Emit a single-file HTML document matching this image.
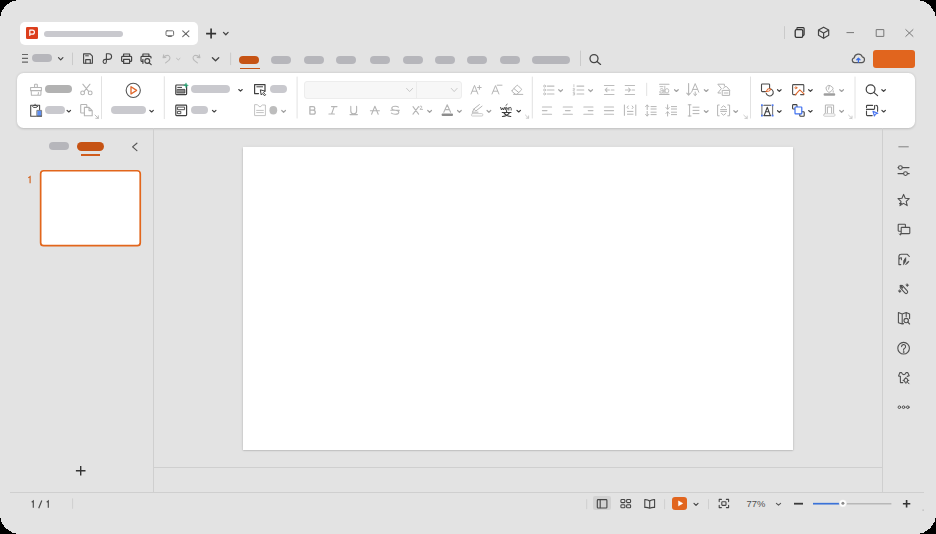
<!DOCTYPE html>
<html><head><meta charset="utf-8">
<style>
html,body{margin:0;padding:0;width:936px;height:534px;overflow:hidden;background:#000;font-family:"Liberation Sans",sans-serif;}
.win{position:absolute;left:0;top:0;width:936px;height:534px;background:#e3e3e3;overflow:hidden;}
.a{position:absolute;}
.p{position:absolute;border-radius:5px;}
svg{position:absolute;left:0;top:0;}
</style></head>
<body>
<div class="win">
  <!-- tab -->
  <div class="a" style="left:20px;top:22px;width:178px;height:22.5px;background:#fff;border-radius:5px;"></div>
  <div class="a" style="left:26px;top:27.2px;width:12px;height:11.8px;background:#dc3e1c;border-radius:1.3px;"></div>
  <div class="p" style="left:44px;top:30.5px;width:79px;height:6.5px;background:#c9c9ce;border-radius:4px;"></div>

  <!-- quick access pills -->
  <div class="p" style="left:32px;top:54px;width:20px;height:8px;background:#b6b6bb;"></div>
  <div class="p" style="left:239px;top:55.5px;width:20px;height:8.5px;background:#c65314;"></div>
  <div class="a" style="left:239.5px;top:67.5px;width:20px;height:1.5px;background:#c65314;"></div>
  <div class="p" style="left:271px;top:55.5px;width:20px;height:8.5px;background:#b6b6bb;"></div>
  <div class="p" style="left:304px;top:55.5px;width:20px;height:8.5px;background:#b6b6bb;"></div>
  <div class="p" style="left:336px;top:55.5px;width:20px;height:8.5px;background:#b6b6bb;"></div>
  <div class="p" style="left:370px;top:55.5px;width:20px;height:8.5px;background:#b6b6bb;"></div>
  <div class="p" style="left:403px;top:55.5px;width:20px;height:8.5px;background:#b6b6bb;"></div>
  <div class="p" style="left:435px;top:55.5px;width:20px;height:8.5px;background:#b6b6bb;"></div>
  <div class="p" style="left:467px;top:55.5px;width:20px;height:8.5px;background:#b6b6bb;"></div>
  <div class="p" style="left:500px;top:55.5px;width:20px;height:8.5px;background:#b6b6bb;"></div>
  <div class="p" style="left:532px;top:55.5px;width:37.5px;height:8.5px;background:#b6b6bb;"></div>

  <!-- orange share button -->
  <div class="a" style="left:873px;top:50px;width:41.5px;height:17.5px;background:#e1651e;border-radius:3px;"></div>

  <!-- ribbon -->
  <div class="a" style="left:17px;top:73px;width:898px;height:55px;background:#fff;border-radius:6.5px;box-shadow:0 0.8px 2.4px rgba(0,0,0,0.17);"></div>

  <!-- ribbon pills -->
  <div class="p" style="left:45px;top:85.3px;width:26.8px;height:8px;background:#b2b2b2;"></div>
  <div class="p" style="left:45px;top:106px;width:20px;height:8px;background:#c9c9ce;"></div>
  <div class="p" style="left:111px;top:106px;width:35px;height:8px;background:#c9c9ce;"></div>
  <div class="p" style="left:191px;top:85.2px;width:38.5px;height:8.2px;background:#c9c9ce;"></div>
  <div class="p" style="left:191px;top:106.1px;width:17px;height:8.3px;background:#c9c9ce;"></div>
  <div class="p" style="left:269.5px;top:85.2px;width:17px;height:8.2px;background:#c9c9ce;"></div>

  <!-- font combos -->
  <div class="a" style="left:303.8px;top:81.2px;width:157.8px;height:17.5px;background:#f7f7f7;border:1px solid #ededed;box-sizing:border-box;border-radius:3px;"></div>
  <div class="a" style="left:416px;top:81.5px;width:1px;height:17px;background:#ececec;"></div>

  <!-- left panel -->
  <div class="p" style="left:48.7px;top:142.3px;width:20.4px;height:8px;background:#b6b6bb;"></div>
  <div class="p" style="left:76.5px;top:142.3px;width:27.6px;height:8.3px;background:#c65314;"></div>
  <div class="a" style="left:80.6px;top:154px;width:19.4px;height:1.6px;background:#d05c1c;"></div>
  <div class="a" style="left:40.5px;top:170px;width:100px;height:76px;background:#fff;border-radius:3px;"></div>

  <!-- separators -->
  <div class="a" style="left:153px;top:128px;width:1px;height:364px;background:#cfcfcf;"></div>
  <div class="a" style="left:882px;top:128px;width:1px;height:364px;background:#cfcfcf;"></div>
  <div class="a" style="left:153px;top:467px;width:729px;height:1px;background:#cfcfcf;"></div>
  <div class="a" style="left:10px;top:491.5px;width:914px;height:1px;background:#cfcfcf;"></div>

  <!-- slide -->
  <div class="a" style="left:243px;top:146.8px;width:550px;height:303px;background:#fff;box-shadow:0 0.6px 1.6px rgba(0,0,0,0.26),0 0 4px rgba(0,0,0,0.05);"></div>

  <!-- status bar -->
  <div class="a" style="left:593px;top:495.7px;width:17.8px;height:14.4px;background:#d2d2d2;border-radius:2px;"></div>
  <div class="a" style="left:672.3px;top:496.7px;width:15px;height:13.4px;background:#e1651e;border-radius:3px;"></div>

  <svg width="936" height="534" viewBox="0 0 936 534" id="icons">
  <g fill="none" stroke-linecap="round" stroke-linejoin="round">
    <!-- P logo -->
    <path d="M29.8,35.4 V30.2 H32.4 A2,1.95 0 0 1 32.4,34.1 H29.8" stroke="#fff" stroke-width="1.2"/>
    <!-- monitor -->
    <rect x="166" y="30.8" width="7.6" height="4.9" rx="1" stroke="#606060" stroke-width="0.9"/>
    <path d="M168.2,36.5 H171.4" stroke="#606060" stroke-width="0.9"/>
    <!-- tab close -->
    <path d="M182.7,30.8 L188.9,36.6 M188.9,30.8 L182.7,36.6" stroke="#6a6a6a" stroke-width="1.1"/>
    <!-- new tab plus -->
    <path d="M211.1,28.6 V38.6 M206.1,33.6 H216.1" stroke="#333" stroke-width="1.65" stroke-linecap="butt"/>
    <path d="M223.5,32.4 L225.8,34.8 L228.1,32.4" stroke="#444" stroke-width="1.3"/>

    <!-- hamburger -->
    <path d="M22,54.5 H28 M22,58.3 H28 M22,62.1 H28" stroke="#666" stroke-width="1.2" stroke-linecap="butt"/>
    <path d="M58.5,57.6 L60.7,59.8 L62.9,57.6" stroke="#444" stroke-width="1.2"/>
    <path d="M72.5,53 V64.7" stroke="#cacaca" stroke-width="1"/>
    <!-- save -->
    <path d="M83.6,53.9 H90.2 L92.4,56.2 V63.3 H83.6 Z" stroke="#444" stroke-width="1.1"/>
    <path d="M85.6,55.8 H88.4" stroke="#444" stroke-width="1"/>
    <path d="M85.7,63.2 V59.6 H90.3 V63.2" stroke="#444" stroke-width="1.1"/>
    <!-- export -->
    <path d="M106.4,53.8 H108.7 A2.9,2.8 0 0 1 108.7,59.4 H105.2 Q103.1,59.7 103.1,61.6 Q103.1,63.5 104.8,63.5 Q106.4,63.5 106.4,61.4 Z" stroke="#444" stroke-width="1.1"/>
    <!-- print -->
    <path d="M123.6,56.3 V54 H129.6 V56.3" stroke="#444" stroke-width="1.2"/>
    <path d="M123.6,61.4 H122.2 A0.8,0.8 0 0 1 121.6,60.6 V57.2 A1,1 0 0 1 122.6,56.4 H130.6 A1,1 0 0 1 131.6,57.2 V60.6 A0.8,0.8 0 0 1 131,61.4 H129.6" stroke="#444" stroke-width="1.2"/>
    <path d="M123.6,59.3 V63.3 H129.6 V59.3 Z" stroke="#444" stroke-width="1.2"/>
    <!-- print preview -->
    <path d="M142.9,56.3 V54 H148.9 V56.3" stroke="#444" stroke-width="1.2"/>
    <path d="M142.6,61.4 H141.6 A0.8,0.8 0 0 1 141,60.6 V57.2 A1,1 0 0 1 142,56.4 H150 A1,1 0 0 1 151,57.2 V58" stroke="#444" stroke-width="1.2"/>
    <path d="M142.9,59.5 V63.3" stroke="#444" stroke-width="1.2"/>
    <circle cx="147.3" cy="61" r="2.4" stroke="#444" stroke-width="1.2"/>
    <path d="M149.1,62.8 L151.2,64.6" stroke="#444" stroke-width="1.2"/>
    <!-- undo / redo (disabled) -->
    <path d="M163.7,54.9 L163.1,57.6 L165.8,57.5 M163.4,57.4 Q166.2,54.6 168.6,55.6 Q171.2,57.4 168.8,60.4 L165.6,62.9" stroke="#b9b9b9" stroke-width="1.1"/>
    <path d="M176.6,58.4 L178.3,59.9 L180,58.4" stroke="#b9b9b9" stroke-width="1"/>
    <path d="M199.3,54.9 L199.9,57.6 L197.2,57.5 M199.6,57.4 Q196.8,54.6 194.4,55.6 Q191.8,57.4 194.2,60.4 L197.4,62.9" stroke="#b9b9b9" stroke-width="1.1"/>
    <path d="M212.4,57.8 L215.55,60.8 L218.7,57.8" stroke="#454545" stroke-width="1.35"/>
    <path d="M230.6,53 V64.7" stroke="#cacaca" stroke-width="1"/>
    <path d="M580.5,51 V65.6" stroke="#cacaca" stroke-width="1"/>
    <!-- search -->
    <circle cx="594" cy="58.6" r="4" stroke="#444" stroke-width="1.3"/>
    <path d="M597,61.6 L600.6,64.4" stroke="#444" stroke-width="1.3"/>

    <!-- title bar right -->
    <path d="M784.5,26.6 V38.6" stroke="#cacaca" stroke-width="1"/>
    <rect x="795.2" y="29.6" width="7.6" height="7.8" rx="1.3" stroke="#333" stroke-width="1.3"/>
    <path d="M796.9,28.3 Q797,27.6 797.8,27.6 H803.2 Q804.1,27.6 804.1,28.5 V34.5 Q804.1,35.3 803.2,35.4" stroke="#333" stroke-width="1.2"/>
    <path d="M823.6,27.2 L828.7,30.1 V35.3 L823.6,38.2 L818.5,35.3 V30.1 Z" stroke="#444" stroke-width="1.2"/>
    <path d="M818.7,30.3 L823.6,33.1 L828.5,30.3 M823.6,33.1 V38" stroke="#444" stroke-width="1.2"/>
    <path d="M846.5,32.6 H854" stroke="#777" stroke-width="1" stroke-linecap="butt"/>
    <rect x="876.6" y="29.6" width="7.2" height="6.8" stroke="#777" stroke-width="1"/>
    <path d="M905.8,29.6 L913,36.4 M913,29.6 L905.8,36.4" stroke="#777" stroke-width="1"/>
    <!-- cloud -->
    <path d="M855.3,62.6 H861.8 A2.9,2.9 0 0 0 862.3,56.9 A4.2,4.2 0 0 0 854.2,57.8 A2.4,2.4 0 0 0 855.3,62.6 Z" stroke="#555" stroke-width="1.2"/>
    <path d="M858.4,62.2 V58.2 M856.8,59.8 L858.4,58.2 L860,59.8" stroke="#3a6ee8" stroke-width="1.3"/>
  </g>

  <g fill="none" stroke-linecap="round" stroke-linejoin="round">
    <!-- clipboard group -->
    <path d="M34.6,87.2 V84.8 Q34.6,84.3 35.1,84.3 H36.8 Q37.3,84.3 37.3,84.8 V87.2" stroke="#b5b5b5" stroke-width="1.05"/>
    <path d="M30.6,87.4 H41.4 V90.6 H30.6 Z" stroke="#b5b5b5" stroke-width="1.05"/>
    <path d="M31.2,90.8 L31.4,95.2 H40.2 Q40.9,95.2 40.9,94.4 L41,90.8 M37.8,95 Q38.6,93.6 38.4,92.6" stroke="#b5b5b5" stroke-width="1.05"/>
    <circle cx="82.6" cy="92.9" r="1.9" stroke="#b5b5b5" stroke-width="1.1"/>
    <circle cx="90.2" cy="92.9" r="1.9" stroke="#b5b5b5" stroke-width="1.1"/>
    <path d="M84.2,91.4 L90,84.2 M88.6,91.4 L82.8,84.2" stroke="#b5b5b5" stroke-width="1.05"/>
    <!-- paste -->
    <path d="M36.4,116.2 H30.7 V105.3 H39.6 V109.4" stroke="#4a4a4a" stroke-width="1.1"/>
    <ellipse cx="35.1" cy="106.4" rx="2.5" ry="1.1" stroke="#4a4a4a" stroke-width="1"/>
    <path d="M35.1,104.2 V105" stroke="#4a4a4a" stroke-width="0.8"/>
    <rect x="37.2" y="110.4" width="4.4" height="5.8" fill="#5d8ff3" stroke="#777" stroke-width="0.9"/>
    <path d="M37.2,116.2 H41.6" stroke="#555" stroke-width="1"/>
    <path d="M67.05,110.35 L68.80,111.95 L70.55,110.35" stroke="#3f3f3f" stroke-width="1.2"/>
    <!-- copy -->
    <path d="M86.8,106.5 V105 A0.6,0.6 0 0 0 86.2,104.5 H81.3 A0.6,0.6 0 0 0 80.7,105 V112.4 A0.6,0.6 0 0 0 81.3,113 H84" stroke="#b5b5b5" stroke-width="1.1"/>
    <path d="M84.4,107.4 H89 L92.2,110.6 V115.7 H84.4 Z M89,107.4 V110.6 H92.2" stroke="#b5b5b5" stroke-width="1.1"/>
    <path d="M95,115 L98.3,118.3 M98.3,115.8 V118.3 H95.8" stroke="#b5b5b5" stroke-width="0.9"/>
    <path d="M101.5,76.7 V118.7" stroke="#e2e2e2" stroke-width="1"/>

    <!-- play -->
    <circle cx="133.25" cy="90.35" r="7.1" stroke="#555" stroke-width="1.1"/>
    <path d="M131,86.7 L136.6,90.35 L131,94 Z" stroke="#e0662a" stroke-width="1.3"/>
    <path d="M149.85,110.35 L151.60,111.95 L153.35,110.35" stroke="#3f3f3f" stroke-width="1.2"/>
    <path d="M164.3,76.7 V118.7" stroke="#e2e2e2" stroke-width="1"/>

    <!-- new slide -->
    <rect x="175.8" y="85" width="10.8" height="9.6" rx="0.8" stroke="#3f3f3f" stroke-width="1.2"/>
    <path d="M177.7,87.4 H181.6" stroke="#3f3f3f" stroke-width="1"/>
    <rect x="177.5" y="89.4" width="7.4" height="3.6" fill="#888" stroke="#3f3f3f" stroke-width="0.8"/>
    <path d="M186,83.4 V87.2 M184.1,85.3 H187.9" stroke="#1ea672" stroke-width="1.1"/>
    <path d="M238.75,89.55 L240.50,91.15 L242.25,89.55" stroke="#3f3f3f" stroke-width="1.2"/>
    <!-- layout -->
    <rect x="175.8" y="105.2" width="10.8" height="10.4" rx="0.8" stroke="#3f3f3f" stroke-width="1.2"/>
    <rect x="177.8" y="107.1" width="6.8" height="2.6" stroke="#3f3f3f" stroke-width="0.9"/>
    <rect x="177.8" y="111.4" width="3" height="2.3" stroke="#3f3f3f" stroke-width="0.9"/>
    <path d="M212.45,110.35 L214.20,111.95 L215.95,110.35" stroke="#3f3f3f" stroke-width="1.2"/>
    <!-- slide cursor -->
    <path d="M258.5,93.6 H254.6 V84.6 H265 V91.2" stroke="#3f3f3f" stroke-width="1.2"/>
    <path d="M256.8,86.8 H262.6" stroke="#3f3f3f" stroke-width="1"/>
    <path d="M260.4,90.2 L261.2,95 L262.4,93.6 L264.6,95.8 L265.6,94.8 L263.4,92.6 L264.8,91.4 Z" fill="#fff" stroke="#3f3f3f" stroke-width="1"/>
    <!-- disabled slide -->
    <path d="M254.6,105 V115.6 H265.4 V105 H262.4 L260,107 L257.6,105 Z" stroke="#c3c3c3" stroke-width="1"/>
    <path d="M256.6,110.4 H263.4 M256.6,112.6 H263.4" stroke="#c3c3c3" stroke-width="1"/>
    <path d="M269.4,110.2 Q269.4,106 273.3,106 Q277.2,106 277.2,110.2 Q277.2,114.4 273.3,114.4 Q269.4,114.4 269.4,110.2 Z" fill="#bdbdbd" stroke="none"/>
    <path d="M281.75,110.50 L283.60,112.25 L285.45,110.50" stroke="#a2a2a2" stroke-width="1.2"/>
    <path d="M297.1,77 V118.1" stroke="#e2e2e2" stroke-width="1"/>

    <!-- font combo chevrons -->
    <path d="M406.6,88.4 L409.6,91.6 L412.6,88.4" stroke="#c9c9c9" stroke-width="1"/>
    <path d="M451.3,88.4 L454.2,91.6 L457.1,88.4" stroke="#c9c9c9" stroke-width="1"/>

    <!-- A+ A- eraser -->
    <path d="M471,94 L474.5,85.4 L477.9,94 M472.3,91.2 H476.7" stroke="#b5b5b5" stroke-width="1"/>
    <path d="M477.6,87.5 H481.2 M479.4,85.6 V89.4" stroke="#b5b5b5" stroke-width="1"/>
    <path d="M492,94 L495.5,85.6 L498.9,94 M493.3,91.2 H497.7" stroke="#b5b5b5" stroke-width="1"/>
    <path d="M497.2,85.2 H502" stroke="#b5b5b5" stroke-width="1"/>
    <path d="M512.2,90.4 L516.6,85.6 Q517.3,84.9 518,85.6 L521.2,88.8 Q521.9,89.5 521.2,90.2 L517,94.2 Q516.2,94.8 515.4,94.2 L512.2,91.6 Q511.6,91 512.2,90.4 Z M514,88.6 L518.6,92.4" stroke="#b5b5b5" stroke-width="1"/>
    <path d="M513.6,94.4 H522.8" stroke="#b5b5b5" stroke-width="1"/>
    <path d="M532.3,77 V118.1" stroke="#e2e2e2" stroke-width="1"/>

    <!-- B I U S S X2 -->
    <path d="M309.9,106.6 V114.1 H313.3 A1.95,1.95 0 0 0 313.3,110.2 H309.9 M313,110.2 A1.8,1.8 0 0 0 313,106.6 H309.9" stroke="#b5b5b5" stroke-width="1.3"/>
    <path d="M331.5,106.6 H337 M328.9,114 H334.4 M334.2,106.6 L331.6,114" stroke="#b5b5b5" stroke-width="1.1"/>
    <path d="M350.8,106.4 V111 A2.6,2.6 0 0 0 356.6,111 V106.4 M350,114.6 H357.4" stroke="#b5b5b5" stroke-width="1.1"/>
    <path d="M371.6,114.2 L374.9,106.2 L378.2,114.2 M370.4,110.7 H379.4" stroke="#b5b5b5" stroke-width="1.1"/>
    <path d="M398.4,107.2 Q397.6,106.3 395.2,106.3 Q391.8,106.3 391.8,108.3 Q391.8,110.1 395.2,110.2 Q398.8,110.3 398.8,112.2 Q398.8,114.2 395.2,114.2 Q392.4,114.2 391.4,113.2 M390.8,110.3 H399.4" stroke="#b5b5b5" stroke-width="1.1"/>
    <path d="M413,106.6 L418.6,114.2 M418.6,106.6 L413,114.2" stroke="#b5b5b5" stroke-width="1.1"/>
    <path d="M419.6,106.8 Q420.4,105.6 421.6,106.3 Q422.4,107.2 420,109.4 H422.6" stroke="#b5b5b5" stroke-width="0.9"/>
    <path d="M427.75,110.50 L429.60,112.25 L431.45,110.50" stroke="#a2a2a2" stroke-width="1.2"/>
    <!-- font color -->
    <path d="M443.8,112.2 L447.2,104.8 L450.6,112.2 M445,109.6 H449.4" stroke="#b5b5b5" stroke-width="1.1"/>
    <rect x="441.6" y="113.4" width="11.4" height="2.6" rx="1" fill="#8d8d8d" stroke="none"/>
    <path d="M457.55,110.50 L459.40,112.25 L461.25,110.50" stroke="#a2a2a2" stroke-width="1.2"/>
    <!-- highlight -->
    <path d="M472.6,112 L473.8,109 L479.4,104.6 M473.8,109 L475.8,111 L482,106.2 M472.4,112.2 H478" stroke="#b5b5b5" stroke-width="1"/>
    <rect x="471.4" y="113.6" width="11.4" height="2.4" rx="1" stroke="#c6c6c6" stroke-width="0.9"/>
    <path d="M487.05,110.50 L488.90,112.25 L490.75,110.50" stroke="#a2a2a2" stroke-width="1.2"/>
    <!-- phonetic -->
    <path d="M500.6,107.4 L501.5,110 L502.5,107.9 L503.5,110 L504.4,107.4" stroke="#3a3a3a" stroke-width="0.9"/>
    <path d="M505.2,108.8 H507.4 Q507.4,107.4 506.3,107.4 Q505.1,107.4 505.1,108.7 Q505.1,110 506.4,110 Q507,110 507.3,109.6 M508.8,110.1 V107.6 M508.8,108.2 Q509.4,107.4 510.2,107.4 Q511.2,107.4 511.2,108.4 V110.1 M505.9,105.4 L507.2,104.3" stroke="#3a3a3a" stroke-width="0.85"/>
    <path d="M506.6,110.6 V112 M502.2,112.5 H511 M503.9,112.9 Q506.2,116.3 510.8,116.4 M509.3,112.9 Q507,116.3 502.4,116.4" stroke="#3a3a3a" stroke-width="1.05"/>
    <path d="M516.95,110.35 L518.70,111.95 L520.45,110.35" stroke="#3a3a3a" stroke-width="1.2"/>
    <path d="M525.4,115 L528.6,118.2 M528.6,115.9 V118.2 H526.3" stroke="#c6c6c6" stroke-width="0.9"/>

    <!-- paragraph row1 -->
    <circle cx="544.6" cy="86.1" r="1" stroke="#bcbcbc" stroke-width="0.9"/>
    <circle cx="544.6" cy="90" r="1" stroke="#bcbcbc" stroke-width="0.9"/>
    <circle cx="544.6" cy="93.9" r="1" stroke="#bcbcbc" stroke-width="0.9"/>
    <path d="M547.3,86.1 H554 M547.3,90 H554 M547.3,93.9 H554" stroke="#bcbcbc" stroke-width="1.05"/>
    <path d="M558.7,89.7 L560.6,91.5 L562.5,89.7" stroke="#a6a6a6" stroke-width="1.2"/>
    <path d="M573.9,84.6 V86.8 M573.2,88.6 H574.6 V89.8 H573.2 V91 H574.6 M573.2,92.6 H574.6 V95 H573.2 M573.4,93.8 H574.6" stroke="#bcbcbc" stroke-width="0.75"/>
    <path d="M577,86.1 H583.8 M577,90 H583.8 M577,93.9 H583.8" stroke="#bcbcbc" stroke-width="1.05"/>
    <path d="M588.7,89.7 L590.6,91.5 L592.5,89.7" stroke="#a6a6a6" stroke-width="1.2"/>
    <path d="M604.4,85.4 H614 M604.4,94.4 H614 M607,88 L605.2,89.9 L607,91.8 M605.6,89.9 H609.4 M611.2,89.9 H614" stroke="#bcbcbc" stroke-width="1.05"/>
    <path d="M625.2,85.4 H634.6 M625.2,94.4 H634.6 M628.6,88 L630.4,89.9 L628.6,91.8 M625.4,89.9 H630 M632,89.9 H634.6" stroke="#bcbcbc" stroke-width="1.05"/>
    <path d="M646.7,83.2 V95.6" stroke="#e2e2e2" stroke-width="1"/>
    <!-- ab -->
    <path d="M659.6,84.2 H669 M659.6,94.4 H669" stroke="#b5b5b5" stroke-width="1.1"/>
    <path d="M660.2,89.2 Q661.2,88.4 662.2,88.6 Q663.2,88.9 663.2,90 V93 M663.2,90.6 Q659.4,90.4 659.6,92 Q659.8,93.2 661.4,93 Q662.8,92.8 663.2,91.6 M664.8,86.2 V93 M664.8,90.6 Q665.4,88.6 667,88.6 Q668.8,88.8 668.8,90.8 Q668.8,93 667,93 Q665.2,93 664.8,91.2 M660,86.6 H663" stroke="#bcbcbc" stroke-width="0.95"/>
    <path d="M674.55,89.70 L676.40,91.45 L678.25,89.70" stroke="#a2a2a2" stroke-width="1.2"/>
    <!-- text direction -->
    <path d="M688.6,83.6 V95 M686.8,93.2 L688.6,95.2 L690.4,93.2" stroke="#b5b5b5" stroke-width="1.1"/>
    <path d="M691.6,92.2 L695.2,83.6 L698.8,92.2 M693,89.4 H697.4 M695.2,92 V95.4 M693.6,94 L695.2,95.5 L696.8,94" stroke="#b5b5b5" stroke-width="1"/>
    <path d="M704.35,89.70 L706.20,91.45 L708.05,89.70" stroke="#a2a2a2" stroke-width="1.2"/>
    <!-- convert -->
    <path d="M724.4,86 V84.2 H717.8 L721.4,88.6 L717.8,93 H720.6" stroke="#b5b5b5" stroke-width="1"/>
    <path d="M723.4,88.4 L725,86.6 H726.6 L729.6,90" stroke="#b5b5b5" stroke-width="1"/>
    <rect x="722.6" y="90.4" width="7" height="5" stroke="#b5b5b5" stroke-width="1"/>
    <path d="M724.2,93 H728" stroke="#b5b5b5" stroke-width="1"/>

    <!-- paragraph row2 -->
    <path d="M542.4,107 H551.6 M542.4,110.6 H547 M542.4,114.3 H551.6" stroke="#bcbcbc" stroke-width="1.05"/>
    <path d="M563.2,107 H572.4 M565.4,110.6 H570.2 M563.2,114.3 H572.4" stroke="#bcbcbc" stroke-width="1.05"/>
    <path d="M583.8,107 H593 M588.2,110.6 H593 M583.8,114.3 H593" stroke="#bcbcbc" stroke-width="1.05"/>
    <path d="M604.4,107 H613.6 M604.4,110.6 H613.6 M604.4,114.3 H613.6" stroke="#bcbcbc" stroke-width="1.05"/>
    <path d="M624.4,105 V115.4 M635.8,105 V115.4 M627.4,111.4 H633 M627.4,114.2 H633 M628.2,106 L627.2,107.4 L628.2,108.6 M632.2,106 L633.2,107.4 L632.2,108.6" stroke="#b5b5b5" stroke-width="1"/>
    <path d="M647.2,109.6 V105 M645.6,106.6 L647.2,105 L648.8,106.6 M647.2,111.4 V116 M645.6,114.4 L647.2,116 L648.8,114.4 M651,106.6 H656.2 M651,109 H656.2 M651,112.2 H656.2 M651,114.6 H656.2" stroke="#b5b5b5" stroke-width="1"/>
    <path d="M667.6,104.8 V109.2 M666,107.6 L667.6,109.2 L669.2,107.6 M667.6,116 V111.8 M666,113.4 L667.6,111.8 L669.2,113.4 M671.4,106.6 H676.6 M671.4,109 H676.6 M671.4,112.2 H676.6 M671.4,114.6 H676.6" stroke="#b5b5b5" stroke-width="1"/>
    <path d="M689.6,104.8 V116 M688.2,104.8 H691 M688.2,116 H691 M693,107.2 H699 M693,110.4 H699 M693,113.6 H699" stroke="#b5b5b5" stroke-width="1"/>
    <path d="M704.35,110.70 L706.20,112.45 L708.05,110.70" stroke="#a2a2a2" stroke-width="1.2"/>
    <path d="M719.2,105 H717.6 V115.8 H719.2 M727.8,105 H729.6 V115.8 H727.8 M720.6,109.6 H726.6 M720.6,111.4 H726.6 M721.6,107.4 L723.6,105.8 L725.6,107.4 M721.6,113.6 L723.6,115.2 L725.6,113.6" stroke="#b5b5b5" stroke-width="1"/>
    <path d="M733.85,110.70 L735.70,112.45 L737.55,110.70" stroke="#a2a2a2" stroke-width="1.2"/>
    <path d="M743.8,115.2 L747.2,118.4 M747.2,116.1 V118.4 H744.9" stroke="#c6c6c6" stroke-width="0.9"/>
    <path d="M750.5,77 V118.1" stroke="#e2e2e2" stroke-width="1"/>

    <!-- shape -->
    <path d="M765.6,91.6 H762.3 A0.8,0.8 0 0 1 761.5,90.8 V84.8 A0.8,0.8 0 0 1 762.3,84 H768.8 A0.8,0.8 0 0 1 769.6,84.8 V88.4" stroke="#4a4a4a" stroke-width="1.1"/>
    <path d="M770.8,88.9 A3.6,3.6 0 1 1 766.2,93.3" stroke="#4a4a4a" stroke-width="1.1"/>
    <path d="M766.3,91.5 L767.7,88.9 H770.9 L770.3,90.3 Q769.4,91.5 766.3,91.5 Z" stroke="#e0662a" stroke-width="1"/>
    <path d="M777.55,89.75 L779.30,91.35 L781.05,89.75" stroke="#3f3f3f" stroke-width="1.2"/>
    <!-- textbox -->
    <path d="M761.9,105.6 V115.4 M772.6,105.6 V115.4" stroke="#7a7a7a" stroke-width="1.1"/>
    <path d="M763.8,105.2 H770.7 M763.8,115.6 H770.7" stroke="#4a4a4a" stroke-width="1.1"/>
    <path d="M764.3,115.2 L767.25,107.2 L770.2,115.2 M765.6,111.8 H768.9" stroke="#3f3f3f" stroke-width="1.05"/>
    <rect x="761" y="104.3" width="1.8" height="1.8" fill="#4d78f0" stroke="none"/>
    <rect x="771.7" y="104.3" width="1.8" height="1.8" fill="#4d78f0" stroke="none"/>
    <rect x="761" y="114.7" width="1.8" height="1.8" fill="#4d78f0" stroke="none"/>
    <rect x="771.7" y="114.7" width="1.8" height="1.8" fill="#4d78f0" stroke="none"/>
    <path d="M777.55,110.75 L779.30,112.35 L781.05,110.75" stroke="#3f3f3f" stroke-width="1.2"/>
    <!-- picture -->
    <path d="M796,94.6 H793.4 A0.8,0.8 0 0 1 792.6,93.8 V85.4 A0.8,0.8 0 0 1 793.4,84.6 H803 A0.8,0.8 0 0 1 803.8,85.4 V91.6 M800.6,94.6 H803.8" stroke="#505050" stroke-width="1.1"/>
    <path d="M795.2,94.8 L799.8,89.8 L804,93.8" stroke="#e0662a" stroke-width="1.1"/>
    <circle cx="795.9" cy="87.8" r="0.95" stroke="#e0662a" stroke-width="0.9"/>
    <path d="M808.65,89.75 L810.40,91.35 L812.15,89.75" stroke="#3f3f3f" stroke-width="1.2"/>
    <!-- fill disabled -->
    <path d="M826.6,86.6 Q828,84.6 830.2,85.6 L832.8,87.6 Q833.6,88.6 832.4,90 L830,92.2 H828.6 Q826,90.8 826,88.4 Z M829.4,85.4 L828.6,89.2 M833.2,90.8 V92.2" stroke="#b5b5b5" stroke-width="1"/>
    <rect x="823.6" y="93.3" width="11.6" height="2.5" rx="1" fill="#9e9e9e" stroke="none"/>
    <path d="M839.75,89.70 L841.60,91.45 L843.45,89.70" stroke="#a2a2a2" stroke-width="1.2"/>
    <!-- arrange -->
    <rect x="792.6" y="104.6" width="4.4" height="4.4" rx="0.8" stroke="#3f3f3f" stroke-width="1.1"/>
    <rect x="799.8" y="111.8" width="4.4" height="4.4" rx="0.8" stroke="#3f3f3f" stroke-width="1.1"/>
    <rect x="795" y="107" width="6.8" height="6.8" rx="0.6" fill="#fff" stroke="#3d6ff0" stroke-width="1.2"/>
    <path d="M808.65,110.55 L810.40,112.15 L812.15,110.55" stroke="#3f3f3f" stroke-width="1.2"/>
    <!-- outline disabled -->
    <path d="M825.4,113 V105 H833.6 V113 M827.4,113 V107 H831.6 V113" stroke="#b5b5b5" stroke-width="1"/>
    <rect x="823.6" y="113.8" width="11.4" height="2.4" rx="1" stroke="#c6c6c6" stroke-width="0.9"/>
    <path d="M839.75,110.50 L841.60,112.25 L843.45,110.50" stroke="#a2a2a2" stroke-width="1.2"/>
    <path d="M848.6,115.2 L852,118.4 M852,116.1 V118.4 H849.7" stroke="#c6c6c6" stroke-width="0.9"/>
    <path d="M855,77 V118.1" stroke="#e2e2e2" stroke-width="1"/>
    <!-- find -->
    <circle cx="870.6" cy="89.2" r="4.4" stroke="#3f3f3f" stroke-width="1.2"/>
    <path d="M873.8,92.4 L877.6,95.6" stroke="#3f3f3f" stroke-width="1.2"/>
    <path d="M881.85,89.75 L883.60,91.35 L885.35,89.75" stroke="#3f3f3f" stroke-width="1.2"/>
    <!-- select -->
    <path d="M866.5,107.6 V106.2 Q866.5,105.4 867.3,105.4 H872.6 M866.5,109.4 H873.8 Q874.6,109.4 874.6,108.6 V105.6 M876,105.4 Q877.6,105.4 877.6,107 V111.2 M866.5,111 V114.8 Q866.5,115.6 867.3,115.6 H872.2" stroke="#454545" stroke-width="1.1"/>
    <path d="M873,111.4 L877.8,113.3 L875.6,114 L874.4,116 Z" fill="#fff" stroke="#4d78f0" stroke-width="1.15"/>
    <path d="M881.90,110.35 L883.65,111.95 L885.40,110.35" stroke="#3f3f3f" stroke-width="1.2"/>
  </g>

  <g fill="none" stroke-linecap="round" stroke-linejoin="round">
    <!-- left panel -->
    <rect x="40.65" y="170.75" width="99.6" height="74.9" rx="3" stroke="#e2661c" stroke-width="1.7"/>
    <path d="M136.9,143.2 L132.6,146.9 L136.9,150.6" stroke="#555" stroke-width="1.2"/>
    <path d="M28.3,177.9 L30.1,176.6 V183.2" stroke="#d2621f" stroke-width="1.15" stroke-linecap="butt" stroke-linejoin="miter"/>
    <path d="M80.7,465.9 V475.5 M75.9,470.7 H85.5" stroke="#333" stroke-width="1.4" stroke-linecap="butt"/>

    <!-- right sidebar -->
    <path d="M898.4,146.8 H908.7" stroke="#808080" stroke-width="1" stroke-linecap="butt"/>
    <path d="M902.4,167.6 H909 M898,173.6 H903.4 M907.6,173.6 H909.2" stroke="#505050" stroke-width="1.1"/>
    <path d="M898,167.6 H898.4" stroke="#505050" stroke-width="1.1"/>
    <circle cx="900.4" cy="167.6" r="1.9" stroke="#505050" stroke-width="1.1"/>
    <circle cx="905.5" cy="173.6" r="1.9" stroke="#505050" stroke-width="1.1"/>
    <path d="M903.6,194.4 L905.2,198.2 L909.2,198.6 L906.2,201.4 L907.2,205.6 L903.6,203.4 L900,205.6 L901,201.4 L898,198.6 L902,198.2 Z" stroke="#505050" stroke-width="1.1"/>
    <path d="M899.4,203.4 H902" stroke="#505050" stroke-width="1"/>
    <path d="M900.6,231.2 H898.8 A0.6,0.6 0 0 1 898.2,230.6 V224.8 A0.6,0.6 0 0 1 898.8,224.2 H904.8 A0.6,0.6 0 0 1 905.4,224.8 V227" stroke="#505050" stroke-width="1.1"/>
    <rect x="901.2" y="227.4" width="8.6" height="6.2" rx="0.6" stroke="#505050" stroke-width="1.1"/>
    <path d="M900.4,233.4 V235 M899.4,234 L900.4,235 L901.4,234" stroke="#505050" stroke-width="0.9"/>
    <path d="M900.8,264.6 H898.9 V256.6 Q898.9,254.3 901.2,254.3 H907.3 L909.3,256.5 M899,259.6 Q899.6,257.6 901.4,257.8 V259.8" stroke="#505050" stroke-width="1.1"/>
    <path d="M903.6,264.4 Q902.6,260.4 905.8,257.6 Q907,261.6 903.6,264.4 Z M905.8,264.4 Q906.6,261.8 909,261 Q908.6,263.6 905.8,264.4 Z" fill="#505050" stroke="#505050" stroke-width="0.6"/>
    <rect x="899.1" y="287.9" width="9.6" height="3.2" rx="1.6" transform="rotate(48 903.9 289.5)" stroke="#505050" stroke-width="1.05"/>
    <path d="M900.4,285.6 L902.4,287.8" stroke="#505050" stroke-width="1.6"/>
    <path d="M907.3,283.9 L908.5,285.2 L907.3,286.5 L906.1,285.2 Z M899.8,289.9 L901,291.2 L899.8,292.5 L898.6,291.2 Z" fill="#505050" stroke="#505050" stroke-width="0.7"/>
    <path d="M898.4,312.6 L902.2,314 L906.2,312.6 L909.6,314 V318.4 M906.2,312.6 V316.6 M902.2,314 V324 M898.4,312.6 V322.8 L902.2,324 L903.6,323.6" stroke="#505050" stroke-width="1.1"/>
    <circle cx="906.2" cy="320.6" r="2.2" stroke="#505050" stroke-width="1.1"/>
    <path d="M907.8,322.2 L909.6,324" stroke="#505050" stroke-width="1.1"/>
    <circle cx="903.6" cy="348.2" r="5.8" stroke="#505050" stroke-width="1.1"/>
    <path d="M901.6,346.6 A2,2 0 1 1 904.4,348.4 Q903.6,349 903.6,349.8 V350.2" stroke="#505050" stroke-width="1.1"/>
    <circle cx="903.6" cy="352" r="0.5" fill="#505050" stroke="#505050" stroke-width="0.6"/>
    <path d="M902.8,382.6 H900.4 V376.4 L898.6,376 L899.8,372.6 H901.6 Q902.2,374.6 903.8,374.6 Q905.4,374.6 906,372.6 H907.8 L909.2,375.8 L907.2,376.4" stroke="#505050" stroke-width="1.1"/>
    <circle cx="905.9" cy="380.4" r="1.9" stroke="#505050" stroke-width="1.1"/>
    <path d="M905.9,377.4 V378.2 M905.9,382.6 V383.4 M903,380.4 H903.8 M908,380.4 H908.8 M907.4,382 L909,383.8" stroke="#505050" stroke-width="1"/>
    <circle cx="899.4" cy="407.2" r="1.3" stroke="#505050" stroke-width="1"/>
    <circle cx="903.6" cy="407.2" r="1.3" stroke="#505050" stroke-width="1"/>
    <circle cx="907.8" cy="407.2" r="1.3" stroke="#505050" stroke-width="1"/>

    <!-- status bar -->
    <path d="M31.7,502.2 L33.3,500.9 V507.8 M46.7,502.2 L48.3,500.9 V507.8 M41.8,500.5 L38.7,508.3" stroke="#4a4a4a" stroke-width="1.15" stroke-linecap="butt" stroke-linejoin="miter"/>
    <path d="M72.6,498.8 V508.4" stroke="#cfcfcf" stroke-width="1"/>
    <path d="M586.7,499.6 V508.8 M664.6,499.6 V508.8 M708.5,499.6 V508.8" stroke="#cfcfcf" stroke-width="1"/>
    <rect x="597.3" y="499.6" width="9.6" height="8.4" rx="0.8" stroke="#444" stroke-width="1.1"/>
    <path d="M600.2,500 V507.6" stroke="#444" stroke-width="1.1"/>
    <rect x="620.9" y="499.5" width="4" height="3.1" rx="0.9" stroke="#444" stroke-width="1.05"/>
    <rect x="626.6" y="499.5" width="4" height="3.1" rx="0.9" stroke="#444" stroke-width="1.05"/>
    <rect x="620.9" y="504.7" width="4" height="3.1" rx="0.9" stroke="#444" stroke-width="1.05"/>
    <rect x="626.6" y="504.7" width="4" height="3.1" rx="0.9" stroke="#444" stroke-width="1.05"/>
    <path d="M649.7,501 Q647.6,499.4 644.8,499.6 V507.4 Q647.6,507.2 649.7,508.2 Q651.8,507.2 654.6,507.4 V499.6 Q651.8,499.4 649.7,501 Z M649.7,501 V508" stroke="#444" stroke-width="1.1"/>
    <path d="M678.8,501.2 L682.6,503.4 L678.8,505.6 Z" fill="#fff" stroke="#fff" stroke-width="0.7"/>
    <path d="M694,503.4 L696,505.4 L698,503.4" stroke="#444" stroke-width="1.2"/>
    <path d="M719.2,501.6 V499.4 H721.4 M726.4,499.4 H728.6 V501.6 M728.6,505.2 V507.6 H726.4 M721.4,507.6 H719.2 V505.2" stroke="#444" stroke-width="1.1"/>
    <rect x="721.8" y="501.8" width="4.2" height="3.6" rx="0.6" stroke="#444" stroke-width="1.1"/>
    <text x="746.5" y="506.9" font-family="Liberation Sans" font-size="9.4" fill="#505050" stroke="none">77%</text>
    <path d="M776.4,503.3 L778.5,505.2 L780.6,503.3" stroke="#555" stroke-width="1.1"/>
    <path d="M794,503.7 H803" stroke="#3a3a3a" stroke-width="1.8" stroke-linecap="butt"/>
    <path d="M842.9,503.7 H891.4" stroke="#b8b8b8" stroke-width="1.6" stroke-linecap="butt"/>
    <path d="M813,503.7 H842.9" stroke="#3a72d8" stroke-width="1.7" stroke-linecap="butt"/>
    <circle cx="842.9" cy="503.3" r="3.6" fill="#fff" stroke="#e8e8e8" stroke-width="0.5"/>
    <circle cx="842.9" cy="503.3" r="1.5" fill="#8a8a8a" stroke="none"/>
    <rect x="922.6" y="509.6" width="1" height="1" fill="#999" stroke="none"/>
    <path d="M906.6,500 V507.4 M902.9,503.7 H910.3" stroke="#333" stroke-width="1.6" stroke-linecap="butt"/>
  </g>

  </svg>
  <svg width="936" height="534" viewBox="0 0 936 534" shape-rendering="crispEdges" style="position:absolute;left:0;top:0;">
    <path d="M0,0 H20 A20,20 0 0 0 0,20 Z M936,0 V20 A20,20 0 0 0 916,0 Z M0,534 V514 A20,20 0 0 0 20,534 Z M936,534 H916 A20,20 0 0 0 936,514 Z" fill="#000"/>
  </svg>
</div>
</body></html>
